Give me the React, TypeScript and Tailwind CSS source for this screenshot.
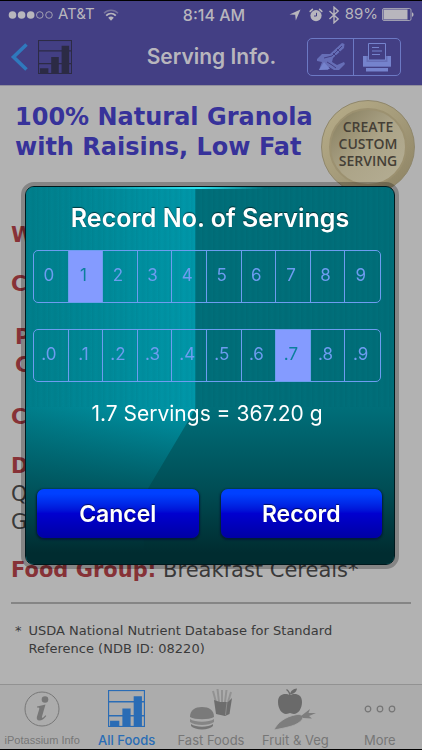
import { useState } from "react";

function ChartIcon({ className, size }: { className: string; size: number }) {
  return (
    <svg width={size} height={size} viewBox="0 0 36 36" className={className} aria-hidden="true">
      <rect x="0.5" y="0.5" width="35" height="35" fill="none" stroke="currentColor" strokeWidth="1.2" />
      <path d="M0 11.5H36M0 25H36" stroke="currentColor" strokeWidth="1.4" />
      <path d="M2 30H11V36H2ZM14 18H22V36H14ZM25 6H33V36H25Z" fill="currentColor" />
    </svg>
  );
}

function StatusBar() {
  return (
    <div className="flex h-7 items-center justify-between border-t border-black px-2 text-[#b8b6bd]">
      <div className="flex w-36 items-center gap-1">
        <svg width="46" height="10" viewBox="0 0 46 10" aria-hidden="true">
          <circle cx="4.5" cy="5" r="3.8" fill="currentColor" />
          <circle cx="13.6" cy="5" r="3.8" fill="currentColor" />
          <circle cx="22.7" cy="5" r="3.8" fill="currentColor" />
          <circle cx="31.8" cy="5" r="3.3" fill="none" stroke="currentColor" strokeWidth="0.8" />
          <circle cx="41" cy="5" r="3.3" fill="none" stroke="currentColor" strokeWidth="0.8" />
        </svg>
        <span className="text-[15px]">AT&amp;T</span>
        <svg width="16" height="12" viewBox="0 0 16 12" className="ml-1" fill="none" stroke="currentColor" aria-label="Wi-Fi">
          <path d="M1 4.2C5 .2 11 .2 15 4.2" strokeWidth="1.5" opacity="0.45" />
          <path d="M3.2 6.6C6 3.9 10 3.9 12.8 6.6" strokeWidth="1.9" />
          <path d="M5.2 8.8C7 7.2 9 7.2 10.8 8.8L8 11.8Z" fill="currentColor" stroke="none" />
        </svg>
      </div>
      <span className="pl-1.5 text-base font-medium">8:14 AM</span>
      <div className="flex w-36 items-center justify-end gap-1">
        <svg width="12" height="12" viewBox="0 0 12 12" fill="currentColor" className="mr-1" aria-label="Location">
          <path d="M11.5.5 6.8 11.5 6.2 5.8.5 5.4Z" />
        </svg>
        <svg width="14" height="14" viewBox="0 0 14 14" aria-label="Alarm">
          <circle cx="7" cy="7.6" r="5.6" fill="currentColor" />
          <path d="M1.200 3.400 3.400 1.400M12.800 3.400 10.600 1.400" stroke="currentColor" strokeWidth="1.6" strokeLinecap="round" />
          <path d="M7.500 4.800V8H5" fill="none" stroke="#433f84" strokeWidth="1" />
        </svg>
        <svg width="14" height="18" viewBox="0 0 14 18" fill="none" stroke="currentColor" strokeWidth="1.4" aria-label="Bluetooth">
          <path d="M2.5 5 11.2 13 7 16.8V1.2L11.2 5 2.5 13" />
        </svg>
        <span className="text-[15px]">89%</span>
        <svg width="32" height="13" viewBox="0 0 32 13" aria-label="Battery">
          <rect x="0.5" y="0.5" width="28.5" height="12" rx="1.5" fill="none" stroke="currentColor" strokeWidth="0.8" />
          <rect x="1.5" y="1.5" width="24" height="10" fill="currentColor" />
          <path d="M30 4.2C32 5 32 8 30 8.8Z" fill="currentColor" />
        </svg>
      </div>
    </div>
  );
}

function NavBar() {
  return (
    <div className="flex h-[57px] items-center justify-between pr-[21px] pl-2.5">
      <button className="flex w-[106px] items-center gap-2.5" aria-label="Back to charts">
        <svg width="18" height="28" viewBox="0 0 18 28" fill="none" stroke="#2f79bd" strokeWidth="3.6" aria-hidden="true">
          <path d="M16.5 1.5 3.5 14 16.5 26.5" />
        </svg>
        <ChartIcon size={34} className="text-[#2c2b45]" />
      </button>
      <h1 className="text-[21px] font-semibold text-[#b8b6bd]">Serving Info.</h1>
      <div className="flex h-[38px] w-[94px] rounded-[5px] border border-[#6c79c4] text-[#7583cd]">
        <button className="flex flex-1 items-center justify-center border-r border-[#6c79c4]" aria-label="Eat">
          <svg width="30" height="30" viewBox="0 0 30 30" aria-hidden="true">
            <path d="M1 17 6 12 14 12 26 1 28.500 2 28 6 17 16 16 20 21 23 28 20 29 22 23 28 18 28 13 25 12 28 3 28 6 20 1 19Z" fill="currentColor" opacity="0.7" />
            <path d="M8 16 16 14 26 4M17 11l3 3M21 7l3 3M11 20 16 23 20 26" fill="none" stroke="#433f84" strokeWidth="1" />
            <path d="M3 28 8 20 14 27Z" fill="currentColor" />
          </svg>
        </button>
        <button className="flex flex-1 items-center justify-center" aria-label="Print">
          <svg width="28" height="30" viewBox="0 0 28 30" aria-hidden="true">
            <path d="M0 14H28V25H0Z" fill="currentColor" opacity="0.7" />
            <path d="M5.500 1.500H22.500V18H5.500Z" fill="#433f84" stroke="currentColor" strokeWidth="1" />
            <path d="M9 5.500H16M9 9H19M9 12.500H17" stroke="currentColor" strokeWidth="1.2" />
            <path d="M0 14H3.500V20H24.500V14H28V24H0Z" fill="currentColor" />
            <path d="M3 26H25V29.500H3Z" fill="currentColor" />
          </svg>
        </button>
      </div>
    </div>
  );
}

function CustomServingSeal() {
  return (
    <button className="flex size-[94px] items-center justify-center rounded-full border border-[#8f876c] bg-linear-to-br from-[#b8ae8a] via-[#a59b7a] to-[#8c8263] p-[7px]">
      <span className="flex size-full items-center justify-center rounded-full border-2 border-[#9c9170] bg-linear-to-br from-[#857c5c] via-[#aca488] to-[#b5ae94] pb-2 font-['Open_Sans',sans-serif] text-sm leading-[17px] font-semibold text-[#453f36]">
        CREATE
        <br />
        CUSTOM
        <br />
        SERVING
      </span>
    </button>
  );
}

function FoodDetails() {
  return (
    <main className="flex-1 px-[11px] font-['DejaVu_Sans',sans-serif] text-[21px] leading-7 text-[#3a3a3a]">
      <div className="flex h-[110px] items-start justify-between pt-3.5">
        <h2 className="pt-0.5 pl-1 text-2xl leading-[30px] font-bold whitespace-nowrap text-[#37329a]">
          100% Natural Granola
          <br />
          with Raisins, Low Fat
        </h2>
        <div className="-mr-1 -ml-4 shrink-0">
          <CustomServingSeal />
        </div>
      </div>
      <dl className="[&_dt]:font-bold [&_dt]:text-[#873237]">
        <dt className="pt-[25px]">Weight:</dt>
        <dt className="pt-[21px]">Calories:</dt>
        <dt className="pt-[25px] pl-1">
          Potassium
          <br />
          Content:
        </dt>
        <dt className="pt-6">Carbs:</dt>
        <dt className="pt-[21px]">Details:</dt>
        <dd>
          Quaker
          <br />
          Granola
        </dd>
        <div className="flex gap-[7px] pt-5">
          <dt>Food Group:</dt>
          <dd>Breakfast Cereals*</dd>
        </div>
      </dl>
      <hr className="mt-[18px] border-t-2 border-[#858585]" />
      <p className="flex gap-[7px] pt-[18px] pl-1 text-[13px] leading-[18px]">
        <span>*</span>
        <span>
          USDA National Nutrient Database for Standard
          <br />
          Reference (NDB ID: 08220)
        </span>
      </p>
    </main>
  );
}

function InfoIcon() {
  return (
    <svg width="36" height="36" viewBox="0 0 36 36" fill="#777" aria-hidden="true">
      <circle cx="18" cy="18" r="17" fill="none" stroke="#777" strokeWidth="1" />
      <circle cx="21" cy="8.500" r="3.300" />
      <path d="M13 15.500C16 15 19 14 21.500 13.500L18 25.500C17.700 27 18.500 27 19.500 26.200L21.500 24.200 22.300 25C20 28 17.500 29.500 15.500 29.500 13 29.500 12.300 27.800 13 25.500L15.200 18.200C15.600 16.800 15 16.500 13 16.500Z" />
    </svg>
  );
}

function FastFoodIcon() {
  return (
    <svg width="44" height="42" viewBox="0 0 44 42" aria-hidden="true">
      <path d="M27 14 24 3M30 14 28.500 1M33 14 33 2M36 14 37.500 2M39 14 42 4" stroke="#929292" strokeWidth="2" />
      <path d="M25 12 31 14 39 14 43 10 40.500 26 36 28 27 26Z" fill="#6d6d6d" />
      <path d="M38 14 36.500 27" stroke="#8c8c8c" />
      <path d="M1 29C1 22 6 19 13 19S25 22 25 29C20 32 6 32 1 29Z" fill="#7a7a7a" />
      <path d="M1 31C6 34.500 20 34.500 25 31V34C20 38 6 38 1 34Z" fill="#858585" />
      <path d="M2 36C7 39.500 19 39.500 24 36V38C20 42.500 6 42.500 2 38Z" fill="#757575" />
    </svg>
  );
}

function ProduceIcon() {
  return (
    <svg width="42" height="42" viewBox="0 0 42 42" aria-hidden="true">
      <path d="M16 7C12 5 4 5 4 14 4 21 8 26 12 26 14 26 15 25 16 25S18 26 20 26C24 26 28 21 28 14 28 5 20 5 16 7Z" fill="#6a6a6a" />
      <path d="M16 8C16 5 14.500 3 12.500 1.500" fill="none" stroke="#6a6a6a" strokeWidth="1.4" />
      <path d="M16 6C17 2.500 19 1 23 .5 22.500 4 20 6 16 6Z" fill="#6a6a6a" />
      <path d="M0 42C3 35 11 28.500 23 26.500 27 26 30 28 28.500 31 24 38 12 39.500 0 42Z" fill="#7d7d7d" stroke="#acacac" strokeWidth="0.8" />
      <path d="M27 28 36 21 34.500 25 42 25 35 28 38 30.500 29 30Z" fill="#7d7d7d" />
    </svg>
  );
}

function MoreIcon() {
  return (
    <svg width="32" height="8" viewBox="0 0 32 8" fill="none" stroke="#757575" strokeWidth="1.2" aria-hidden="true">
      <circle cx="4" cy="4" r="2.800" />
      <circle cx="16" cy="4" r="2.800" />
      <circle cx="28" cy="4" r="2.800" />
    </svg>
  );
}

function TabBar() {
  const tabs = [
    { label: "iPotassium Info", icon: <InfoIcon />, text: "font-['Liberation_Sans',sans-serif] text-[11px] text-[#777]" },
    { label: "All Foods", icon: <ChartIcon size={37} className="text-[#2a6cb5]" />, text: "text-[13px] font-medium text-[#2a6cb5]" },
    { label: "Fast Foods", icon: <FastFoodIcon />, text: "text-[13px] text-[#777]" },
    { label: "Fruit & Veg", icon: <ProduceIcon />, text: "text-[13px] text-[#777]" },
    { label: "More", icon: <MoreIcon />, text: "text-[13px] text-[#777]" },
  ];
  return (
    <nav className="grid grid-cols-5 border-t border-b border-t-[#929292] border-b-black bg-[#acacac]">
      {tabs.map((tab) => (
        <a key={tab.label} href="#" className="flex h-16 flex-col items-center whitespace-nowrap">
          <span className="flex h-[47px] items-center">{tab.icon}</span>
          <span className={`${tab.text} leading-4`}>{tab.label}</span>
        </a>
      ))}
    </nav>
  );
}

type PickerProps = {
  name: string;
  legend: string;
  prefix: string;
  value: number;
  onChange: (value: number) => void;
};

function DigitPicker({ name, legend, prefix, value, onChange }: PickerProps) {
  return (
    <fieldset
      aria-label={legend}
      className="grid h-[53px] w-full grid-cols-10 divide-x divide-[#6d9cf0] overflow-hidden rounded-[5px] border border-[#6d9cf0]"
    >
      {[0, 1, 2, 3, 4, 5, 6, 7, 8, 9].map((digit) => (
        <label
          key={digit}
          className="flex items-center justify-center pr-1 text-[17px] text-[#6d9cf0] has-checked:bg-[#849bff] has-checked:text-[#0b7f9c]"
        >
          <input
            type="radio"
            name={name}
            checked={value === digit}
            onChange={() => onChange(digit)}
            className="size-0 appearance-none"
          />
          {`${prefix}${digit}`}
        </label>
      ))}
    </fieldset>
  );
}

function DialogButton({ children }: { children: string }) {
  return (
    <button className="h-[49px] flex-1 rounded-[7px] bg-linear-to-b from-[#0040ff] from-10% via-[#0000d0] via-50% to-[#0000a4] pt-0.5 text-[23px] font-semibold text-white shadow-[0_1px_2px_1px_#001c38] text-shadow-[0_-1px_1px_#00000090]">
      {children}
    </button>
  );
}

function ServingDialog() {
  const [whole, setWhole] = useState(1);
  const [tenth, setTenth] = useState(7);
  const servings = whole + tenth / 10;

  return (
    <div className="fixed inset-0 flex items-center justify-center pr-[27px] pl-[25px]">
      <section
        role="dialog"
        aria-labelledby="dialog-title"
        className="relative isolate w-full overflow-hidden rounded-[9px] border border-[#00181c] bg-[#006f7a] px-[7px] pt-[14px] pb-[26px] outline-4 outline-black/25"
      >
        <div className="absolute inset-0 -z-10 bg-linear-to-r from-[#007f8c] to-[#0098aa] to-46% [clip-path:polygon(0_0,46%_0,46%_59%,32%_82%,32%_100%,0_100%)]" />
        <div className="absolute inset-x-0 top-0 -z-10 h-[220px] bg-[repeating-linear-gradient(90deg,#0000000a_0px,#00000000_4px,#00000008_7px,#00000000_11px)]" />
        <div className="absolute inset-0 -z-10 bg-linear-to-b from-transparent from-58% via-[#003c42a8] via-80% to-[#002c30] to-97%" />
        <div className="absolute inset-x-0 top-0 h-0.5 bg-linear-to-r from-transparent from-15% via-[#2be3f0] via-47% to-transparent to-65%" />
        <h2 id="dialog-title" className="text-center text-[25px] leading-[34px] font-semibold text-white text-shadow-[0_-1px_1px_#00000090]">
          Record No. of Servings
        </h2>
        <div className="flex flex-col gap-[26px] pt-[15px] pr-1.5">
          <DigitPicker name="whole" legend="Whole servings" prefix="" value={whole} onChange={setWhole} />
          <DigitPicker name="tenth" legend="Tenths of a serving" prefix="." value={tenth} onChange={setTenth} />
        </div>
        <p className="pt-4 pr-1.5 text-center text-[21px] leading-8 text-white">
          {`${servings.toFixed(1)} Servings = ${(servings * 216).toFixed(2)} g`}
        </p>
        <div className="flex gap-[22px] pt-[59px] pr-[5px] pl-1">
          <DialogButton>Cancel</DialogButton>
          <DialogButton>Record</DialogButton>
        </div>
      </section>
    </div>
  );
}

export default function App() {
  return (
    <div className="flex min-h-screen flex-col bg-[#b2b2b2] font-[Inter,sans-serif]">
      <header className="border-b border-[#918f9c] bg-[#433f84]">
        <StatusBar />
        <NavBar />
      </header>
      <FoodDetails />
      <TabBar />
      <ServingDialog />
    </div>
  );
}
